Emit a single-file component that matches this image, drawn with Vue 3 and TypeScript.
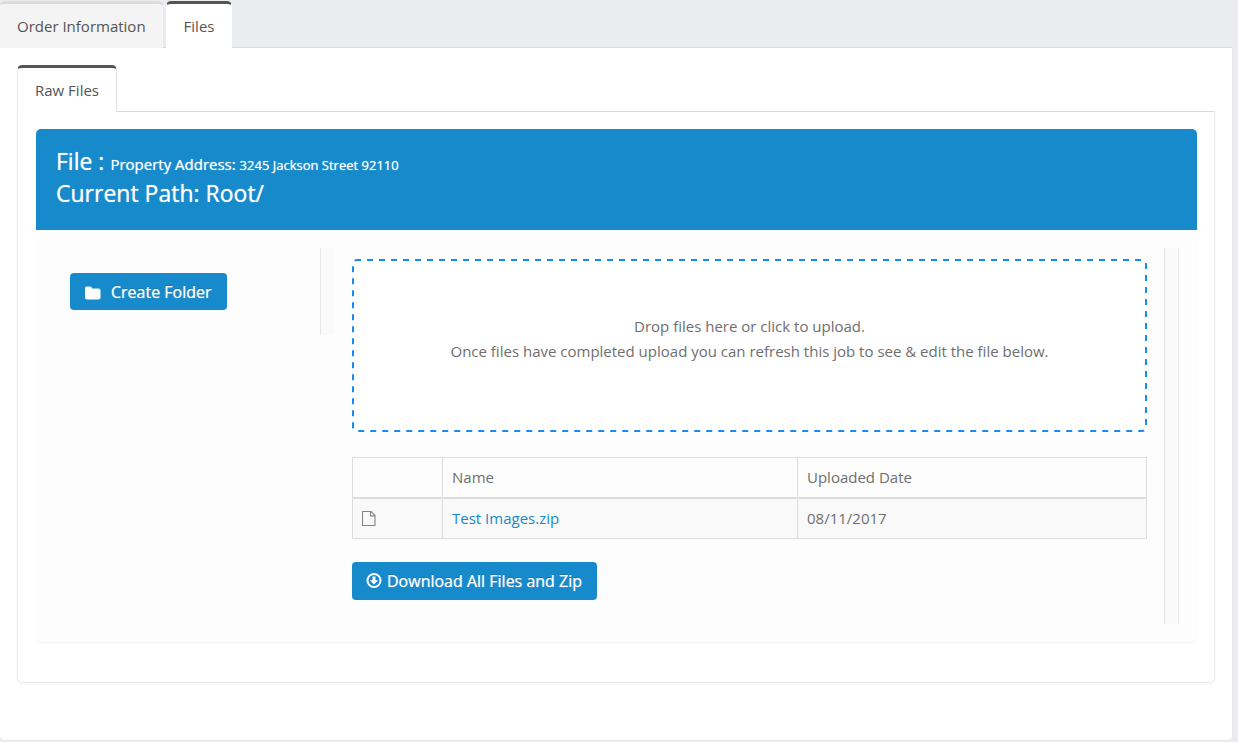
<script setup lang="ts">
import { ref } from 'vue'

interface UploadedFile {
  name: string
  date: string
}

const tabs = ['Order Information', 'Files']
const activeTab = ref('Files')
const files: UploadedFile[] = [{ name: 'Test Images.zip', date: '08/11/2017' }]
</script>

<template>
  <main class="page">
    <nav class="tabs" role="tablist">
      <button
        v-for="tab in tabs"
        :key="tab"
        type="button"
        role="tab"
        class="tab"
        :class="{ active: tab === activeTab }"
        :aria-selected="tab === activeTab"
        @click="activeTab = tab"
      >{{ tab }}</button>
    </nav>

    <section class="panel outer-panel">
      <nav class="tabs" role="tablist">
        <button type="button" role="tab" class="tab active bordered" aria-selected="true">Raw Files</button>
      </nav>

      <section class="panel inner-panel">
        <article class="card">
          <header class="card-head">
            <h1 class="title">File : <span class="address-label">Property Address: <small class="address">3245 Jackson Street 92110</small></span></h1>
            <h2 class="title">Current Path: Root/</h2>
          </header>

          <div class="card-body">
            <aside class="sidebar">
              <button type="button" class="btn create">
                <svg class="folder" viewBox="0 0 16 14" aria-hidden="true">
                  <path d="M0 2.6C0 1.5.9.6 2 .6h3c1.1 0 2 .9 2 2h6.5c1.1 0 2 .9 2 2v6.9c0 1.1-.9 2-2 2H2c-1.1 0-2-.9-2-2z" fill="currentColor" />
                </svg>
                <span>Create Folder</span>
              </button>
            </aside>
            <div class="rail"></div>

            <div class="content">
              <button type="button" class="dropzone">
                <svg class="outline" aria-hidden="true">
                  <rect class="outline-rect" x="1" y="1" rx="4" />
                </svg>
                <span>Drop files here or click to upload.</span>
                <span>Once files have completed upload you can refresh this job to see &amp; edit the file below.</span>
              </button>

              <table class="files">
                <colgroup>
                  <col class="col-icon" />
                  <col class="col-name" />
                  <col />
                </colgroup>
                <thead>
                  <tr>
                    <th></th>
                    <th scope="col">Name</th>
                    <th scope="col">Uploaded Date</th>
                  </tr>
                </thead>
                <tbody>
                  <tr v-for="file in files" :key="file.name">
                    <td>
                      <svg class="file-icon" viewBox="0 0 14 16" aria-hidden="true">
                        <path d="M.5 1.5h8.6l3.9 3.9v10.1H.5zM8.5 1.5v4.4H13" fill="none" stroke="currentColor" stroke-width="1.1" stroke-linejoin="round" />
                      </svg>
                    </td>
                    <td><a href="#">{{ file.name }}</a></td>
                    <td>{{ file.date }}</td>
                  </tr>
                </tbody>
              </table>

              <button type="button" class="btn download">
                <svg class="circle-down" viewBox="0 0 16 16" aria-hidden="true">
                  <circle cx="8" cy="7.5" r="6.5" fill="none" stroke="currentColor" stroke-width="2" />
                  <path d="M6.5 3.5h3v3.7h2.6L8 11.6 3.9 7.2h2.6z" fill="currentColor" />
                </svg>
                <span>Download All Files and Zip</span>
              </button>
            </div>
            <div class="rail rail-end"></div>
          </div>
        </article>
      </section>
    </section>
  </main>
</template>

<style>
body {
  background: #ebecf0;
}
</style>

<style scoped>
.page {
  box-sizing: border-box;
  padding: 1px 5px 1px 0;
  font-family: "Open Sans", "Noto Sans", sans-serif;
  font-size: 15px;
  line-height: 25px;
  color: #6f6f6f;
}

.page * {
  box-sizing: border-box;
}

.tabs {
  display: flex;
  gap: 3px;
  margin-bottom: -1px;
}

.tab {
  position: relative;
  height: 47px;
  padding: 0 17px;
  border: 0;
  border-top: 3px solid #dcdcdc;
  border-radius: 5px 5px 0 0;
  background: #f4f4f4;
  color: #555;
  font: inherit;
  cursor: pointer;
}

.tab.active {
  border-top-color: #555;
  border-left: 1px solid #fff;
  border-right: 1px solid #fff;
  background: #fff;
}

.tab.bordered {
  border-left-color: #e8e8e8;
  border-right-color: #e0e0e0;
}

.panel {
  border: 1px solid #e8e8ea;
  border-top-color: #d8d9dc;
  border-radius: 0 0 5px 5px;
  background: #fff;
}

.outer-panel {
  padding: 17px 17px 57px;
  border-left: 0;
}

.inner-panel {
  padding: 17px 17px 39px 18px;
  box-shadow: 0 2px 3px rgba(0, 0, 0, 0.03);
}

.card {
  overflow: hidden;
  border-radius: 5px;
  border-bottom: 1px solid #f2f2f2;
  background: #fdfdfd;
}

.card-head {
  height: 101px;
  padding: 16px 20px;
  background: #178acc;
  color: #fff;
  text-shadow: 0 0 1px rgba(255, 255, 255, 0.7);
}

.title {
  margin: 0;
  font-size: 23px;
  line-height: 32px;
  font-weight: 500;
}

.address-label {
  font-size: 15px;
  line-height: 1;
}

.address {
  font-size: 13px;
}

.card-body {
  display: flex;
  align-items: flex-start;
  padding: 18px 18px 18px 0;
}

.sidebar {
  flex: 0 0 284px;
  padding: 25px 34px;
}

.rail {
  flex: 0 0 14px;
  height: 87px;
  border-left: 1px solid #e7e7e7;
  background: #fafafa;
}

.rail-end {
  flex-basis: 15px;
  align-self: stretch;
  height: auto;
  border-right: 1px solid #ececec;
}

.content {
  flex: 1;
  min-width: 0;
  padding: 11px 17px 24px 18px;
}

.btn {
  display: inline-flex;
  align-items: center;
  border: 0;
  border-radius: 4px;
  background: #178acc;
  color: #fff;
  font: inherit;
  font-size: 16px;
  font-weight: 500;
  text-shadow: 0 0 1px rgba(255, 255, 255, 0.7), 0 -1px 0 rgba(0, 0, 0, 0.25);
  cursor: pointer;
}

.create {
  height: 37px;
  padding: 2px 15px 0;
  gap: 10px;
}

.download {
  height: 38px;
  padding: 0 15px 0 14px;
  gap: 5px;
}

.folder {
  width: 16px;
  height: 14px;
}

.circle-down {
  width: 16px;
  height: 16px;
}

.dropzone {
  position: relative;
  display: flex;
  flex-direction: column;
  align-items: center;
  width: 100%;
  height: 173px;
  padding: 55px 22px;
  border: 0;
  border-radius: 5px;
  background: #fff;
  color: inherit;
  font: inherit;
  cursor: pointer;
}

.outline {
  position: absolute;
  inset: 0;
  width: 100%;
  height: 100%;
}

.outline-rect {
  width: calc(100% - 2px);
  height: calc(100% - 2px);
  fill: none;
  stroke: #188af0;
  stroke-width: 2px;
  stroke-dasharray: 6 6;
  stroke-dashoffset: 2px;
}

.files {
  width: 100%;
  margin: 25px 0 23px;
  border-collapse: collapse;
  table-layout: fixed;
}

.col-icon {
  width: 90px;
}

.col-name {
  width: 355px;
}

.files th,
.files td {
  height: 41px;
  padding: 0 9px;
  border: 1px solid #ddd;
  text-align: left;
  font-weight: 400;
}

.files th {
  height: 40px;
  border-bottom-width: 2px;
}

.files td {
  background: #f9f9f9;
}

.files a {
  color: #178acc;
  text-decoration: none;
}

.file-icon {
  display: block;
  width: 14px;
  height: 16px;
  color: #858585;
}
</style>
